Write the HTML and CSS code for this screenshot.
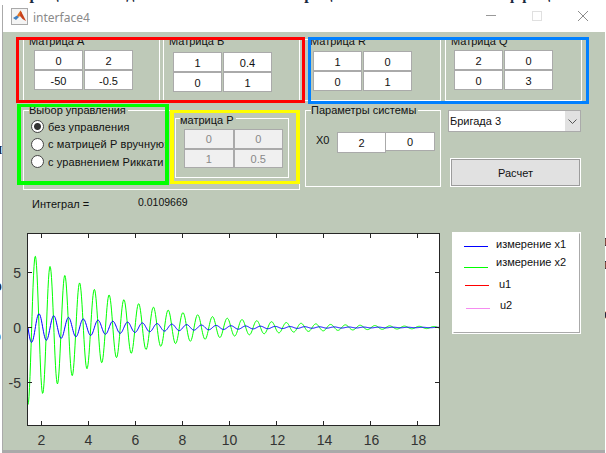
FILE: index.html
```html
<!DOCTYPE html>
<html lang="en">
<head>
    <meta charset="UTF-8">
    <meta name="viewport" content="width=device-width, initial-scale=1.0">
    <title>interface4</title>
    <link rel="stylesheet" href="styles.css">
</head>
<body>
    <div class="doc">
        <div class="doc-top">матрицами Модели вызываемого процесс вычисления коэффициентов</div>
        <div class="doc-left doc-l1">п</div>
        <div class="doc-left doc-l2">р</div>
        <div class="doc-left doc-l3">о</div>
        <div class="doc-right doc-r1">в</div>
        <div class="doc-right doc-r2">н</div>
        <div class="doc-right doc-r3">е</div>
    </div>

    <div class="window">
        <div class="titlebar">
            <svg class="app-icon" width="17" height="17" viewBox="0 0 17 17">
                <rect x="0.5" y="0.5" width="16" height="16" fill="#f4f4f4" stroke="#a9a9a9"/>
                <polygon points="2,10 6,7.5 8,9 5,12" fill="#3f7fc0"/>
                <polygon points="6,7.5 9.5,2.5 11,5 8,9" fill="#e2701f"/>
                <polygon points="9.5,2.5 12,7 15,13 11.5,11 9,8" fill="#c8401a"/>
            </svg>
            <span class="title-text">interface4</span>
            <div class="win-buttons">
                <svg class="win-btn" width="12" height="12" viewBox="0 0 12 12"><path d="M1 5.5H11" stroke="#999" fill="none"/></svg>
                <svg class="win-btn" width="12" height="12" viewBox="0 0 12 12"><rect x="1.5" y="1.5" width="9" height="9" stroke="#e0e0e0" fill="none"/></svg>
                <svg class="win-btn" width="12" height="12" viewBox="0 0 12 12"><path d="M1 1L11 11M11 1L1 11" stroke="#8c8c8c" fill="none"/></svg>
            </div>
        </div>

        <div class="client">
            <div class="row-matrices">
                <fieldset class="panel panel-a">
                    <legend>Матрица А</legend>
                    <div class="cells">
                        <div class="cell">0</div><div class="cell">2</div>
                        <div class="cell">-50</div><div class="cell">-0.5</div>
                    </div>
                </fieldset>
                <fieldset class="panel panel-b">
                    <legend>Матрица В</legend>
                    <div class="cells">
                        <div class="cell">1</div><div class="cell">0.4</div>
                        <div class="cell">0</div><div class="cell">1</div>
                    </div>
                </fieldset>
                <fieldset class="panel panel-r">
                    <legend>Матрица R</legend>
                    <div class="cells">
                        <div class="cell">1</div><div class="cell">0</div>
                        <div class="cell">0</div><div class="cell">1</div>
                    </div>
                </fieldset>
                <fieldset class="panel panel-q">
                    <legend>Матрица Q</legend>
                    <div class="cells">
                        <div class="cell">2</div><div class="cell">0</div>
                        <div class="cell">0</div><div class="cell">3</div>
                    </div>
                </fieldset>
            </div>

            <div class="row-controls">
                <fieldset class="panel panel-control">
                    <legend>Выбор управления</legend>
                    <div class="control-body">
                        <div class="radios">
                            <label class="radio-row"><input type="radio" name="mode" checked>без управления</label>
                            <label class="radio-row"><input type="radio" name="mode">с матрицей Р вручную:</label>
                            <label class="radio-row"><input type="radio" name="mode">с уравнением Риккати</label>
                        </div>
                        <fieldset class="panel panel-p">
                            <legend>матрица Р</legend>
                            <div class="cells cells-off">
                                <div class="cell">0</div><div class="cell">0</div>
                                <div class="cell">1</div><div class="cell">0.5</div>
                            </div>
                        </fieldset>
                    </div>
                </fieldset>

                <fieldset class="panel panel-params">
                    <legend>Параметры системы</legend>
                    <div class="x0-row">
                        <span class="x0-label">X0</span>
                        <div class="cell x0-first">2</div>
                        <div class="cell x0-second">0</div>
                    </div>
                </fieldset>

                <div class="side">
                    <div class="select">
                        <span class="select-text">Бригада 3</span>
                        <span class="select-arrow">
                            <svg width="9" height="5" viewBox="0 0 9 5"><path d="M0.5 0.5L4.5 4.5L8.5 0.5" stroke="#555" fill="none"/></svg>
                        </span>
                    </div>
                    <button class="calc-btn">Расчет</button>
                </div>
            </div>

            <div class="row-integral">
                <span class="integral-label">Интеграл =</span>
                <span class="integral-value">0.0109669</span>
            </div>

            <div class="row-plot">
                <svg class="plot" width="442" height="222" viewBox="3 228 442 222">
                    <rect x="27.5" y="233.5" width="412" height="192" fill="#fff"/>
                    <defs>
                        <clipPath id="axes-clip"><rect x="28" y="234" width="411" height="191"/></clipPath>
                    </defs>
                    <g clip-path="url(#axes-clip)">
                        <path id="line-x2" fill="none" stroke="#00ff00" stroke-width="1"/>
                        <path id="line-x1" fill="none" stroke="#0000ff" stroke-width="1"/>
                    </g>
                    <rect x="27.5" y="233.5" width="412" height="192" fill="none" stroke="#262626"/>
                    <path fill="none" stroke="#262626" d="M41.5 425V421M88.5 425V421M135.5 425V421M182.5 425V421M229.5 425V421M276.5 425V421M323.5 425V421M370.5 425V421M417.5 425V421
                        M41.5 234V238M88.5 234V238M135.5 234V238M182.5 234V238M229.5 234V238M276.5 234V238M323.5 234V238M370.5 234V238M417.5 234V238
                        M28 272.5H32M28 327.5H32M28 382.5H32M439 272.5H435M439 327.5H435M439 382.5H435"/>
                    <text class="tick" x="41.5" y="445">2</text>
                    <text class="tick" x="88.5" y="445">4</text>
                    <text class="tick" x="135.5" y="445">6</text>
                    <text class="tick" x="182.5" y="445">8</text>
                    <text class="tick" x="229.5" y="445">10</text>
                    <text class="tick" x="277.5" y="445">12</text>
                    <text class="tick" x="324.5" y="445">14</text>
                    <text class="tick" x="371.5" y="445">16</text>
                    <text class="tick" x="418.5" y="445">18</text>
                    <text class="tick tick-y" x="21" y="278">5</text>
                    <text class="tick tick-y" x="21" y="333">0</text>
                    <text class="tick tick-y" x="21" y="388">-5</text>
                </svg>

                <div class="legend-box">
                    <div class="legend-row row-x1"><span class="swatch swatch-x1"></span><span class="legend-text">измерение x1</span></div>
                    <div class="legend-row row-x2"><span class="swatch swatch-x2"></span><span class="legend-text">измерение x2</span></div>
                    <div class="legend-row row-u1"><span class="swatch swatch-u1"></span><span class="legend-text">u1</span></div>
                    <div class="legend-row row-u2"><span class="swatch swatch-u2"></span><span class="legend-text">u2</span></div>
                </div>
            </div>

            <div class="mark mark-red"></div>
            <div class="mark mark-blue"></div>
            <div class="mark mark-green"></div>
            <div class="mark mark-yellow"></div>
        </div>
    </div>

    <script src="script.js"></script>
</body>
</html>
```

FILE: styles.css
```css
html, body {
    height: 100%;
    margin: 0;
    overflow: hidden;
}
body {
    position: relative;
    background-color: #fff;
    font-family: "Liberation Sans", Arial, sans-serif;
    font-size: 11px;
    color: #111;
}

/* document behind the window */
.doc {
    position: absolute;
    inset: 0;
    overflow: hidden;
    font-family: "Liberation Serif", serif;
    font-size: 16px;
    font-weight: bold;
    color: #1a2a40;
}
.doc-top {
    position: absolute;
    left: 0;
    top: -15px;
    white-space: nowrap;
    word-spacing: 6px;
    letter-spacing: 1px;
}
.doc-left {
    position: absolute;
    left: -7px;
}
.doc-right {
    position: absolute;
    left: 604px;
}
.doc-l1 { top: 140px; }
.doc-l2 { top: 277px; }
.doc-l3 { top: 327px; }
.doc-r1 { top: 232px; }
.doc-r2 { top: 255px; }
.doc-r3 { top: 305px; }

/* window */
.window {
    position: absolute;
    left: 2px;
    top: 5px;
    width: 603px;
    height: 448px;
    box-sizing: border-box;
    border-left: 1px solid #aaa;
    border-bottom: 3px solid #aaa;
    display: flex;
    flex-direction: column;
}
.titlebar {
    height: 27px;
    flex: none;
    background-color: #fff;
    display: flex;
    align-items: center;
    padding-left: 8px;
    padding-bottom: 5px;
    box-sizing: border-box;
}
.title-text {
    margin-left: 5px;
    padding-top: 2px;
    font-family: "Noto Sans", sans-serif;
    font-size: 12px;
    color: #8a8a8a;
}
.win-buttons {
    margin-left: auto;
    margin-right: 16px;
    display: flex;
    gap: 34px;
}
.win-btn {
    display: block;
}
.client {
    position: relative;
    flex: 1;
    background-color: #bec9b8;
    padding: 1px 0 0 20px;
}

/* panels */
.panel {
    margin: 0;
    padding: 0;
    min-width: 0;
    box-sizing: border-box;
    border: 1px solid #fff;
}
.panel legend {
    margin-left: 5px;
    padding: 0 2px 0 0;
    height: 12px;
    line-height: 12px;
    white-space: nowrap;
}
.row-matrices {
    display: flex;
}
.row-matrices .panel {
    width: 137px;
    height: 68px;
}
.row-matrices .panel legend,
.panel-p legend {
    line-height: 16px;
}
.panel-b { margin-left: 3px; }
.panel-r { margin-left: 4px; }
.panel-q { margin-left: 4px; }

.cells {
    display: grid;
    grid-template-columns: 49px 49px;
    column-gap: 1px;
    grid-auto-rows: 20px;
}
.panel-a .cells { margin: 5px 0 0 10px; }
.panel-b .cells { margin: 7px 0 0 9px; }
.panel-r .cells { margin: 6px 0 0 8px; }
.panel-q .cells { margin: 5px 0 0 8px; }

.cell {
    box-sizing: border-box;
    border: 1px solid #aaa;
    background-color: #fff;
    text-align: center;
    line-height: 20px;
    color: #111;
}
.cells-off {
    grid-template-columns: 49.5px 49.5px;
    column-gap: 0;
    grid-auto-rows: 19.5px;
    margin: 5px 0 0 8px;
}
.cells-off .cell {
    background-color: #f0f0f0;
    color: #888;
    line-height: 18px;
}

/* second row */
.row-controls {
    display: flex;
    align-items: flex-start;
    margin-top: 3px;
}
.panel-control {
    width: 277px;
    height: 86px;
}
.control-body {
    display: flex;
    align-items: flex-start;
}
.radios {
    width: 144px;
    padding: 2px 0 0 7px;
    flex: none;
}
.radio-row {
    display: flex;
    align-items: center;
    height: 17.5px;
    white-space: nowrap;
    letter-spacing: 0.1px;
}
.radio-row input {
    appearance: none;
    flex: none;
    width: 13px;
    height: 13px;
    margin: 0 4px 0 0;
    border: 1px solid #444;
    border-radius: 50%;
    background-color: #fff;
}
.radio-row input:checked {
    background: radial-gradient(circle, #333 0, #333 3px, #fff 4px);
}
.panel-p {
    width: 114px;
    height: 66px;
    margin-top: -4px;
}
.panel-p legend {
    margin-left: 4px;
}
.panel-params {
    width: 136px;
    height: 83px;
    margin-left: 5px;
}
.x0-row {
    display: flex;
    align-items: flex-start;
    margin: 16px 0 0 10px;
}
.x0-label {
    width: 21px;
    line-height: 16px;
}
.x0-first {
    width: 49px;
    height: 21px;
    line-height: 21px;
}
.x0-second {
    width: 49px;
    height: 19px;
    line-height: 18px;
    border-left: none;
}
.side {
    width: 133px;
    margin: 6px 0 0 7px;
    display: flex;
    flex-direction: column;
    align-items: flex-end;
}
.select {
    width: 133px;
    height: 22px;
    box-sizing: border-box;
    border: 1px solid #aaa;
    background-color: #fff;
    display: flex;
    align-items: center;
}
.select-text {
    padding-left: 1px;
    flex: 1;
}
.select-arrow {
    width: 15px;
    height: 100%;
    background-color: #e1e1e1;
    display: flex;
    align-items: center;
    justify-content: center;
}
.calc-btn {
    width: 131px;
    height: 29px;
    margin-top: 26px;
    padding: 0;
    box-sizing: border-box;
    border: 1px solid #fff;
    outline: 1px solid #9c9c9c;
    outline-offset: -2px;
    background-color: #e1e1e1;
    font-family: inherit;
    font-size: 11px;
    color: #111;
}

.row-integral {
    display: flex;
    align-items: center;
    height: 24px;
    padding-left: 9px;
}
.integral-label {
    width: 106px;
    padding-top: 3px;
}
.integral-value {
    font-size: 10.5px;
}

/* plot and legend */
.row-plot {
    display: flex;
    align-items: flex-start;
    margin: 14px 0 0 -20px;
}
.plot {
    display: block;
    flex: none;
}
.tick {
    font-family: "Liberation Sans", Arial, sans-serif;
    font-size: 14px;
    fill: #333;
    text-anchor: middle;
}
.tick-y {
    text-anchor: end;
}
.legend-box {
    width: 127px;
    height: 100px;
    margin: 5px 0 0 8px;
    box-sizing: border-box;
    border: 1px solid #fff;
    border-right-color: #aaa;
    border-bottom-color: #aaa;
    outline: 1px solid #fff;
    background-color: #fff;
    padding-left: 10px;
}
.legend-row {
    display: flex;
    align-items: center;
    height: 14px;
}
.row-x1 { margin-top: 3px; }
.row-x2 { margin-top: 4px; }
.row-u1 { margin-top: 8px; }
.row-u2 { margin-top: 7px; }
.swatch {
    flex: none;
    width: 24px;
    height: 1px;
    margin-right: 8px;
}
.swatch-x1 { background-color: #0000ff; margin-top: 5px; }
.swatch-x2 { background-color: #00ff00; margin-top: 11px; }
.swatch-u1 { background-color: #ff0000; margin: 3px 10px 0 1px; }
.swatch-u2 { background-color: #f58cf0; margin: 7px 10px 0 2px; }

/* coloured marks drawn over the form */
.mark {
    position: absolute;
    box-sizing: border-box;
    pointer-events: none;
}
.mark-red {
    left: 13px;
    top: 5px;
    width: 289px;
    height: 66px;
    border: 3px solid #ff0000;
}
.mark-blue {
    left: 305px;
    top: 5px;
    width: 281px;
    height: 67px;
    border: 3px solid #0080ff;
}
.mark-green {
    left: 14px;
    top: 72px;
    width: 152px;
    height: 81px;
    border: 4px solid #00ff00;
    border-top-width: 3px;
}
.mark-yellow {
    left: 167px;
    top: 78px;
    width: 130px;
    height: 74px;
    border: 3px solid #ffff00;
    border-left-width: 4px;
    border-right-width: 4px;
}
```

FILE: script.js
```js
// x1 and x2 of the lightly damped system, sampled per half pixel
const toY = v => 327.5 - 11 * v;

function buildPath(fn) {
    let d = '';
    for (let px = 28; px <= 439; px += 0.5) {
        const t = 1.99 + (px - 41.5) / 23.5;
        d += (d ? 'L' : 'M') + px + ' ' + toY(fn(t)).toFixed(2);
    }
    return d;
}

document.getElementById('line-x1').setAttribute('d',
    buildPath(t => 2 * Math.exp(-0.25 * t) * Math.cos(10 * t)));
document.getElementById('line-x2').setAttribute('d',
    buildPath(t => -10 * Math.exp(-0.25 * t) * Math.sin(10 * t)));
```
